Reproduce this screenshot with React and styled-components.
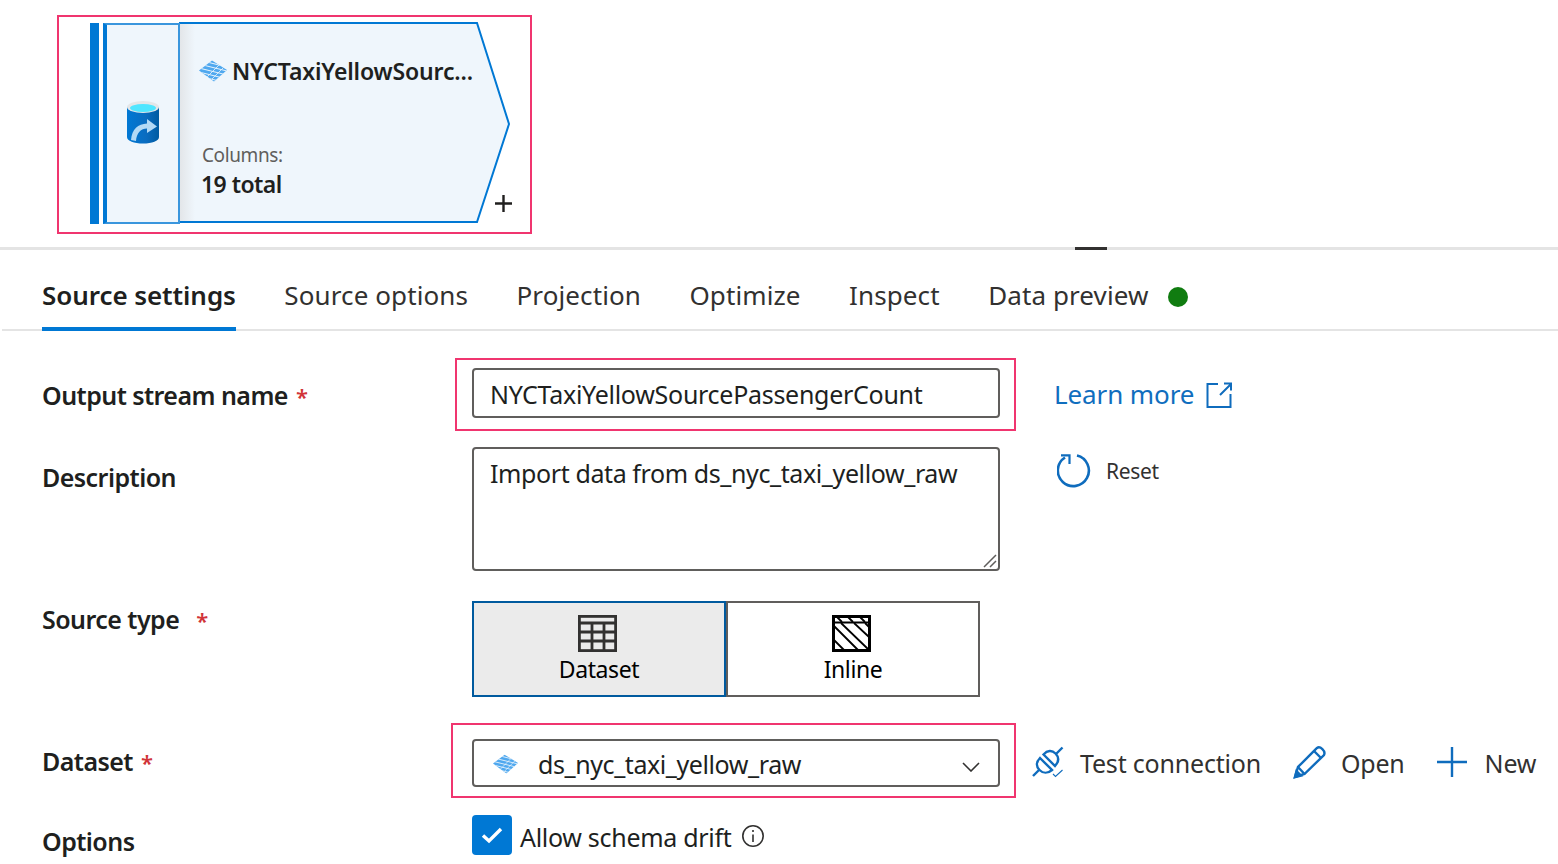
import React from "react";
import styled, { createGlobalStyle } from "styled-components";

const GlobalStyle = createGlobalStyle`
  html, body {
    margin: 0;
    padding: 0;
    background: #fff;
    overflow: hidden;
    height: 864px;
  }
  body {
    font-family: "Noto Sans", "Open Sans", "Liberation Sans", sans-serif;
    color: #201f1e;
  }
`;

const Page = styled.div`
  width: 1558px;
  height: 864px;
  overflow: hidden;
`;

const Canvas = styled.div`
  height: 247px;
  padding: 15px 0 0 57px;
  box-sizing: border-box;
`;

const Highlight = styled.div`
  position: relative;
  &::before {
    content: "";
    position: absolute;
    top: ${p => p.$top}px;
    right: -16px;
    bottom: ${p => p.$bottom}px;
    left: ${p => p.$left}px;
    border: 2px solid #f0356f;
    pointer-events: none;
  }
`;

const NodeFrame = styled.div`
  width: 475px;
  height: 219px;
  box-sizing: border-box;
  border: 2px solid #f0356f;
  padding: 5px 0 0 31px;
`;

const Node = styled.div`
  position: relative;
  width: 424px;
  height: 202px;
  display: flex;
`;

const NodeShape = styled.svg`
  position: absolute;
  inset: 0;
`;

const NodeBar = styled.div`
  width: 9px;
  background: #0078d4;
  margin: 1px 4px 0 0;
  z-index: 1;
`;

const NodeIconCell = styled.div`
  width: 71px;
  margin-top: 1px;
  background: #eff6fc;
  border-left: 4px solid #0078d4;
  border-right: 2px solid #3a96dd;
  border-top: 2px solid #3a96dd;
  border-bottom: 2px solid #3a96dd;
  display: flex;
  align-items: center;
  justify-content: center;
  z-index: 1;
`;

const NodeBody = styled.div`
  position: relative;
  flex: 1;
  padding: 35px 0 0 22px;
  display: flex;
  flex-direction: column;
  z-index: 1;
`;

const NodeTitle = styled.div`
  display: flex;
  align-items: center;
  gap: 5px;
  margin-left: -3px;
  font-size: 23px;
  line-height: 28px;
  font-weight: 600;
  letter-spacing: -0.15px;
  color: #201f1e;
`;

const NodeCaption = styled.div`
  margin-top: 57px;
  font-size: 19px;
  line-height: 26px;
  color: #605e5c;
  letter-spacing: -0.4px;
`;

const NodeCount = styled.div`
  margin: 1px 0 0 -1px;
  font-size: 23px;
  line-height: 30px;
  font-weight: 600;
  letter-spacing: -0.55px;
`;

const NodeAdd = styled.div`
  position: absolute;
  left: 405px;
  top: 173px;
  z-index: 2;
  display: flex;
`;

const Splitter = styled.div`
  height: 3px;
  background: #e4e4e4;
  padding-left: 1075px;
`;

const SplitterHandle = styled.div`
  width: 32px;
  height: 3px;
  background: #323130;
`;

const Tabs = styled.div`
  height: 81px;
  margin-left: 2px;
  padding-left: 40px;
  box-sizing: border-box;
  border-bottom: 2px solid #e4e4e4;
  display: flex;
  gap: 48.5px;
  align-items: flex-start;
`;

const Tab = styled.div`
  display: flex;
  align-items: center;
  gap: 20px;
  height: 81px;
  padding-top: 13px;
  box-sizing: border-box;
  font-size: 26px;
  letter-spacing: ${p => (p.$active ? "-0.07px" : "0.1px")};
  font-weight: ${p => (p.$active ? 600 : 400)};
  color: ${p => (p.$active ? "#201f1e" : "#323130")};
  border-bottom: ${p => (p.$active ? "4px solid #0078d4" : "4px solid transparent")};
`;

const StatusDot = styled.span`
  width: 20px;
  height: 20px;
  margin-top: 4px;
  border-radius: 50%;
  background: #107c10;
`;

const Form = styled.div`
  padding-left: 42px;
  display: flex;
  flex-direction: column;
`;

const Row = styled.div`
  display: flex;
  align-items: flex-start;
  margin-top: ${p => p.$top}px;
`;

const Label = styled.div`
  width: 430px;
  flex: none;
  padding-top: ${p => p.$pad}px;
  font-size: 25px;
  line-height: 32px;
  font-weight: 600;
  letter-spacing: -0.55px;
  color: #201f1e;
`;

const Required = styled.span`
  color: #d13438;
  font-size: 22px;
  margin-left: ${p => p.$gap}px;
`;

const TextInput = styled.div`
  width: 528px;
  height: 50px;
  box-sizing: border-box;
  border: 2px solid #605e5c;
  border-radius: 4px;
  padding: 2px 16px 0;
  display: flex;
  align-items: center;
  font-size: 25px;
  letter-spacing: -0.28px;
`;

const TextArea = styled.div`
  position: relative;
  width: 528px;
  height: 124px;
  box-sizing: border-box;
  border: 2px solid #605e5c;
  border-radius: 4px;
  padding: 8px 16px;
  font-size: 25px;
  line-height: 32px;
  letter-spacing: -0.4px;
`;

const ResizeGrip = styled.svg`
  position: absolute;
  right: 0;
  bottom: 0;
`;

const SideLink = styled.a`
  display: flex;
  align-items: center;
  gap: 12px;
  margin: ${p => p.$margin};
  font-size: 26px;
  letter-spacing: -0.1px;
  color: #106ebe;
`;

const SideLinkText = styled.span`
  padding-bottom: 2px;
`;

const ResetAction = styled.div`
  display: flex;
  align-items: center;
  gap: 15px;
  margin: 7px 0 0 57px;
  font-size: 21px;
  letter-spacing: -0.3px;
  color: #323130;
`;

const Toggle = styled.div`
  display: flex;
`;

const ToggleOption = styled.div`
  width: 254px;
  height: 96px;
  box-sizing: border-box;
  background: ${p => (p.$selected ? "#ebebeb" : "#fff")};
  border: 2px solid ${p => (p.$selected ? "#005a9e" : "#605e5c")};
  display: flex;
  flex-direction: column;
  align-items: center;
  padding-top: 12px;
  font-size: 23px;
  line-height: 30px;
  letter-spacing: -0.4px;
  color: #000;
`;

const ToggleIcon = styled.div`
  height: 39px;
  margin-left: -4px;
  display: flex;
`;

const Select = styled.div`
  width: 528px;
  height: 48px;
  box-sizing: border-box;
  border: 2px solid #605e5c;
  border-radius: 4px;
  padding: 2px 18px 0 19px;
  display: flex;
  align-items: center;
  font-size: 25px;
  letter-spacing: -0.42px;
`;

const SelectValue = styled.span`
  flex: 1;
  margin-left: 20px;
`;

const Chevron = styled.svg`
  margin-top: 6px;
`;

const Actions = styled.div`
  display: flex;
  align-items: center;
  height: 48px;
  margin-left: 32px;
  margin-top: -1px;
`;

const Action = styled.div`
  display: flex;
  align-items: center;
  gap: ${p => p.$gap}px;
  margin-right: ${p => p.$after}px;
  font-size: 25px;
  letter-spacing: -0.2px;
  color: #323130;
`;

const ActionLabel = styled.span`
  padding-top: 2px;
`;

const CheckRow = styled.div`
  display: flex;
  align-items: center;
  gap: 8px;
  font-size: 25px;
  letter-spacing: -0.3px;
`;

const CheckLabel = styled.span`
  padding-top: 4px;
`;

const CheckBox = styled.span`
  width: 40px;
  height: 40px;
  border-radius: 4px;
  background: #0078d4;
  display: flex;
  align-items: center;
  justify-content: center;
`;

const InfoIcon = styled.svg`
  margin: 2px 0 0 2px;
`;

const CylinderWrap = styled.div`
  display: flex;
  margin: -4px 0 0 1px;
`;

const StripesIcon = ({ id, width = 28, height = 22 }) => (
  <svg width={width} height={height} viewBox="0 0 28 22" fill="none">
    <defs>
      <clipPath id={id}>
        <path d="M0 10.5 L13 0.5 L28 10 L15 21.5 Z" />
      </clipPath>
    </defs>
    <g clipPath={`url(#${id})`}>
      <rect width="28" height="22" fill="#4fa8ef" />
      <g stroke="#eaf4fc" strokeWidth="1">
        <path d="M0 0 L28 7" />
        <path d="M0 4 L28 11" />
        <path d="M0 8 L28 15" />
        <path d="M0 12 L28 19" />
        <path d="M0 16 L28 23" />
      </g>
      <g stroke="#eaf4fc" strokeWidth="0.8">
        <path d="M8 17 L21 4" />
        <path d="M13 19 L25 7" />
      </g>
    </g>
  </svg>
);

const CylinderIcon = () => (
  <svg width="34" height="44" viewBox="0 0 34 44">
    <defs>
      <linearGradient id="cyl" x1="0" x2="1" y1="0" y2="0">
        <stop offset="0" stopColor="#0078d4" />
        <stop offset="0.6" stopColor="#0a6cc0" />
        <stop offset="1" stopColor="#005ba1" />
      </linearGradient>
    </defs>
    <path d="M1 7 V37 C1 41 8 43.5 17 43.5 S33 41 33 37 V7 Z" fill="url(#cyl)" />
    <ellipse cx="17" cy="7" rx="16" ry="6" fill="#e4e6e8" />
    <ellipse cx="17" cy="8" rx="13" ry="4" fill="#50e6ff" />
    <path d="M5 40 C6 29 12 24 21 23.5 V19 L31 26.5 L21 33 V28.5 C15 28.5 10.5 33 10 41 Z" fill="#b3d9f5" />
  </svg>
);

const TableIcon = () => (
  <svg width="39" height="37" viewBox="0 0 39 37" fill="none" stroke="#323130" strokeWidth="2.8">
    <rect x="1.4" y="1.4" width="36.2" height="34.2" />
    <path d="M1 8 H38 M1 17 H38 M1 26 H38 M14 8 V36 M26 8 V36" />
  </svg>
);

const InlineIcon = () => (
  <svg width="39" height="37" viewBox="0 0 39 37" fill="none" stroke="#000" strokeWidth="1.8">
    <path d="M1 7.5 H38" strokeWidth="2" />
    <path d="M5 2 L10 7 M16 2 L21 7 M28 2 L33 7" />
    <path d="M2 11 L27 36 M9 8 L37 35 M22 8 L37 22 M33 8 L37 12" />
    <path d="M1 24 L13 36" />
    <rect x="1.5" y="1.5" width="36" height="34" strokeWidth="3" />
  </svg>
);

const ExternalIcon = () => (
  <svg width="26" height="26" viewBox="0 0 26 26" fill="none" stroke="#0f6cbd" strokeWidth="2">
    <path d="M12 2 H1.5 V25 H24.5 V12" />
    <path d="M14 13 L25 2 M18 1.5 H25 V8.5" />
  </svg>
);

const ResetIcon = () => (
  <svg width="34" height="34" viewBox="0 0 34 34" fill="none" stroke="#0f6cbd" strokeWidth="2.6">
    <path d="M20 1.5 A15.5 15.5 0 1 1 8 3.5" />
    <path d="M4 1.4 H12.5 V10" strokeWidth="2.2" />
  </svg>
);

const PlugIcon = () => (
  <svg width="32" height="32" viewBox="0 0 32 32" fill="none" stroke="#0f6cbd" strokeWidth="2.4">
    <path d="M1 30 L7 24" />
    <path d="M24 8 L30.5 1.5" />
    <path d="M8 12 L20 24 C16 27.5 11 27.5 7.5 24 C4 20.5 4 16 8 12 Z" />
    <path d="M11.5 8.5 L23 20 C27 15.5 27 11 23.5 7.5 C20 4 15.5 4 11.5 8.5 Z" />
    <path d="M21 28 L23.5 30.5 L30.5 24" strokeWidth="1.1" />
  </svg>
);

const PencilIcon = () => (
  <svg width="34" height="34" viewBox="0 0 34 34" fill="none" stroke="#0f6cbd" strokeWidth="2.4">
    <path d="M2 32 L5 22 L24 3 C27 0.5 33 6 31 10 L11.5 29 Z" />
    <path d="M2 32 L3.5 26 L8 30.5 Z" fill="#0f6cbd" />
    <path d="M5 22 L11.5 29" />
    <path d="M21 6 L28 13" />
  </svg>
);

const PlusIcon = ({ size, color, weight }) => (
  <svg width={size} height={size} viewBox={`0 0 ${size} ${size}`} stroke={color} strokeWidth={weight}>
    <path d={`M${size / 2} 0 V${size} M0 ${size / 2} H${size}`} />
  </svg>
);

const App = () => (
  <Page>
    <GlobalStyle />
    <Canvas>
      <NodeFrame>
        <Node>
          <NodeShape width="424" height="202" viewBox="0 0 424 202">
            <defs>
              <linearGradient id="fold" x1="0" x2="1" y1="0" y2="0">
                <stop offset="0" stopColor="#e3e6e9" />
                <stop offset="1" stopColor="#eff6fc" />
              </linearGradient>
            </defs>
            <path d="M90 1 H387 L419 102 L387 200 H90 Z" fill="#eff6fc" stroke="#0078d4" strokeWidth="2" />
            <rect x="90" y="2" width="15" height="197" fill="url(#fold)" />
          </NodeShape>
          <NodeBar />
          <NodeIconCell>
            <CylinderWrap>
              <CylinderIcon />
            </CylinderWrap>
          </NodeIconCell>
          <NodeBody>
            <NodeTitle>
              <StripesIcon id="stripes-node" />
              NYCTaxiYellowSourc...
            </NodeTitle>
            <NodeCaption>Columns:</NodeCaption>
            <NodeCount>19 total</NodeCount>
          </NodeBody>
          <NodeAdd>
            <PlusIcon size={17} color="#201f1e" weight={2.4} />
          </NodeAdd>
        </Node>
      </NodeFrame>
    </Canvas>
    <Splitter>
      <SplitterHandle />
    </Splitter>
    <Tabs>
      <Tab $active>Source settings</Tab>
      <Tab>Source options</Tab>
      <Tab>Projection</Tab>
      <Tab>Optimize</Tab>
      <Tab>Inspect</Tab>
      <Tab>
        Data preview
        <StatusDot />
      </Tab>
    </Tabs>
    <Form>
      <Row $top={37}>
        <Label $pad={11}>
          Output stream name<Required $gap={8}>*</Required>
        </Label>
        <Highlight $top={-10} $bottom={-13} $left={-17}>
          <TextInput>NYCTaxiYellowSourcePassengerCount</TextInput>
        </Highlight>
        <SideLink $margin="8px 0 0 54px">
          <SideLinkText>Learn more</SideLinkText>
          <ExternalIcon />
        </SideLink>
      </Row>
      <Row $top={29}>
        <Label $pad={14}>Description</Label>
        <TextArea>
          Import data from ds_nyc_taxi_yellow_raw
          <ResizeGrip width="16" height="16" viewBox="0 0 16 16" stroke="#605e5c" strokeWidth="1.5">
            <path d="M2 14 L14 2 M8 14 L14 8" />
          </ResizeGrip>
        </TextArea>
        <ResetAction>
          <ResetIcon />
          Reset
        </ResetAction>
      </Row>
      <Row $top={30}>
        <Label $pad={2}>
          Source type<Required $gap={17}>*</Required>
        </Label>
        <Toggle>
          <ToggleOption $selected>
            <ToggleIcon>
              <TableIcon />
            </ToggleIcon>
            Dataset
          </ToggleOption>
          <ToggleOption>
            <ToggleIcon>
              <InlineIcon />
            </ToggleIcon>
            Inline
          </ToggleOption>
        </Toggle>
      </Row>
      <Row $top={42}>
        <Label $pad={6}>
          Dataset<Required $gap={8}>*</Required>
        </Label>
        <Highlight $top={-16} $bottom={-11} $left={-21}>
          <Select>
            <StripesIcon id="stripes-select" width={25} height={20} />
            <SelectValue>ds_nyc_taxi_yellow_raw</SelectValue>
            <Chevron width="18" height="10" viewBox="0 0 18 10" fill="none" stroke="#323130" strokeWidth="1.6">
              <path d="M1 1 L9 9 L17 1" />
            </Chevron>
          </Select>
        </Highlight>
        <Actions>
          <Action $after={32} $gap={16}>
            <PlugIcon />
            <ActionLabel>Test connection</ActionLabel>
          </Action>
          <Action $after={32} $gap={14}>
            <PencilIcon />
            <ActionLabel>Open</ActionLabel>
          </Action>
          <Action $after={0} $gap={18}>
            <PlusIcon size={30} color="#0f6cbd" weight={2.4} />
            <ActionLabel>New</ActionLabel>
          </Action>
        </Actions>
      </Row>
      <Row $top={28}>
        <Label $pad={10}>Options</Label>
        <CheckRow>
          <CheckBox>
            <svg width="22" height="18" viewBox="0 0 22 18" fill="none" stroke="#fff" strokeWidth="3.4">
              <path d="M2 9.5 L8 15 L20 3" />
            </svg>
          </CheckBox>
          <CheckLabel>Allow schema drift</CheckLabel>
          <InfoIcon width="24" height="24" viewBox="0 0 24 24" fill="none" stroke="#323130" strokeWidth="1.6">
            <circle cx="12" cy="12" r="10.2" />
            <path d="M12 10.5 V18 M12 6 V8" />
          </InfoIcon>
        </CheckRow>
      </Row>
    </Form>
  </Page>
);

export default App;
